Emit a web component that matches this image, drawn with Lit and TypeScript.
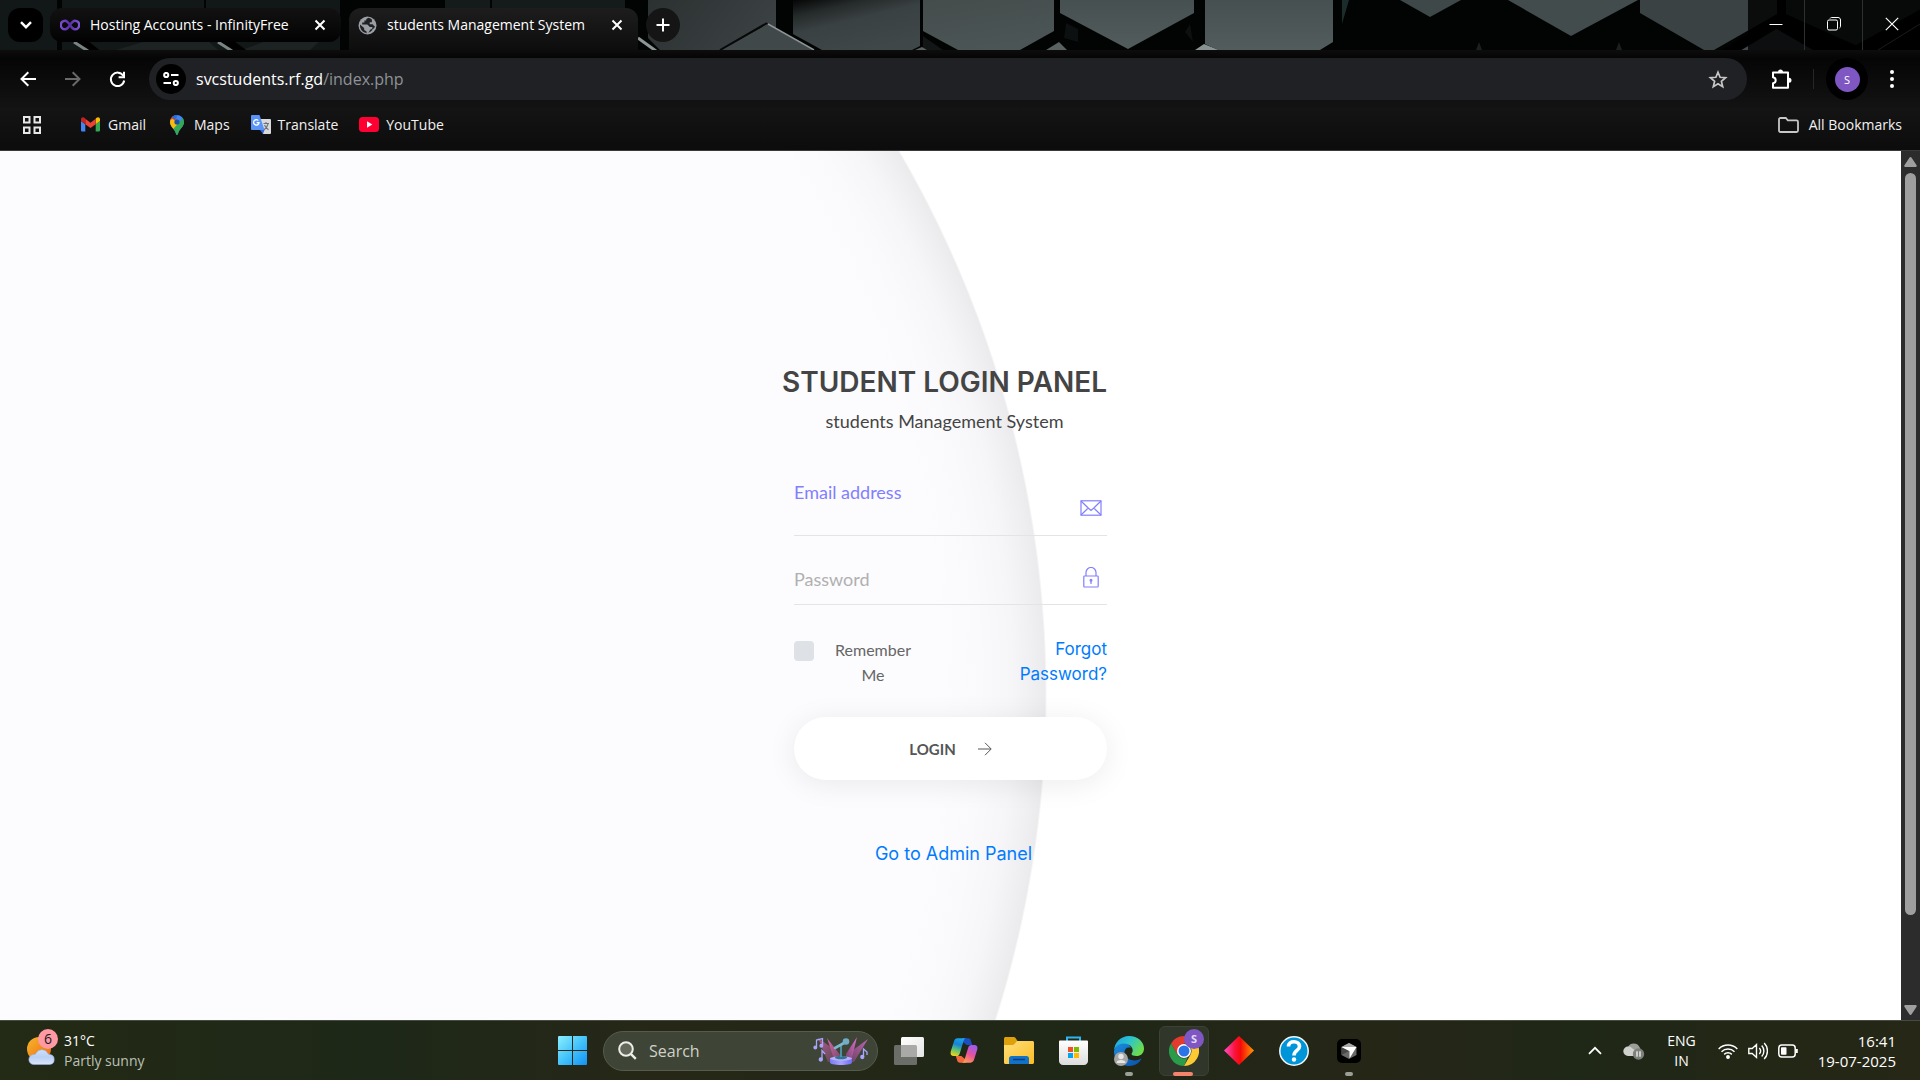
import { LitElement, html, css, svg } from "lit";
import { customElement, state } from "lit/decorators.js";

const uiFont = css`"Open Sans", "Noto Sans", sans-serif`;

/* ---------- shared icons ---------- */

const closeIcon = svg`<svg width="12" height="12" viewBox="0 0 12 12" fill="none" stroke="#fff" stroke-width="2" aria-hidden="true"><path d="M1.5 1.5l9 9M10.5 1.5l-9 9"/></svg>`;

const infinityIcon = html`<svg width="20" height="12" viewBox="0 0 20 12" fill="none" aria-hidden="true">
  <defs><linearGradient id="inf" x1="0" x2="1"><stop offset="0" stop-color="#7a4fd0"/><stop offset=".5" stop-color="#5b2ea6"/><stop offset="1" stop-color="#7d55d6"/></linearGradient></defs>
  <path d="M10 6C8.2 3.2 6.9 1.7 5.1 1.7a4.2 4.2 0 0 0 0 8.6C6.9 10.3 8.2 8.8 10 6s3.1-4.3 4.9-4.3a4.3 4.3 0 0 1 0 8.6C13.1 10.3 11.8 8.8 10 6z" stroke="url(#inf)" stroke-width="2.4"/></svg>`;

const globeIcon = html`<svg width="19" height="19" viewBox="0 0 19 19" aria-hidden="true">
  <circle cx="9.5" cy="9.5" r="9" fill="#9aa0a6"/>
  <path d="M10.8 1.8c-2 .4-2.7 1.2-2.7 2.6H6.4v2.2H4.2v2h4.9c1.7 0 1.3 2.4 3 2.4h2.3c.3 2.3-1.6 2.3-2.4 2.8-.4 1.5-1.4 3.2-3.2 3.7l-.5-2.5c-2 0-2.2-1.3-2.2-2.9L2 8.6C1.6 13 4.6 17 9 17.2l1.5-.8c2.2-.3 3.4-1.6 4.2-3.3.9-.4 1.7-1.3 2.3-2.6-1.5-.2-1.2-1.8-2.6-2.2h-2.7V6.2h2.2V3.6c-.9-.9-2-1.4-3.1-1.8z" fill="#202124"/></svg>`;

/* ---------- browser window frame ---------- */

@customElement("browser-frame")
export class BrowserFrame extends LitElement {
  static styles = css`
    :host { display: block; font-family: ${uiFont}; color: #fff; background: #0c0c0c; }
    * { box-sizing: border-box; }
    button { border: 0; padding: 0; margin: 0; background: none; color: inherit; font: inherit; display: flex; align-items: center; justify-content: center; flex: none; }
    svg { display: block; flex: none; }
    .strip { position: relative; display: flex; align-items: center; height: 50px; padding: 0 0 0 8px; overflow: hidden; background: #040505; }
    .backdrop { position: absolute; left: 0; top: 0; width: 100%; height: 50px; }
    .strip > :not(.backdrop) { position: relative; }
    .finder { width: 35px; height: 34px; border-radius: 12px; background: #000; }
    .tabs { display: flex; gap: 8px; margin-left: 7px; align-self: stretch; padding-top: 8px; }
    .tab { display: flex; align-items: center; font-size: 14px; line-height: 20px; white-space: nowrap; }
    .tab .name { flex: 1; }
    .idle { width: 291px; height: 34px; padding: 0 13px 0 10px; gap: 10px; border-radius: 12px; background: linear-gradient(#121212, #020202); }
    .live { width: 289px; height: 42px; padding: 0 13px 8px 9px; gap: 10px; border-radius: 12px 12px 0 0; background: linear-gradient(#1d1d1d, #0d0d0d); }
    .shut { width: 16px; height: 24px; }
    .plus { width: 34px; height: 34px; margin-left: 8px; border-radius: 17px; background: #151515; }
    .captions { display: flex; align-self: stretch; margin-left: auto; background: rgba(0, 0, 0, 0.8); }
    .captions button { width: 58px; padding-bottom: 2px; border-left: 1px solid #2b3030; }
    .captions button:first-child { width: 56px; border-left: 0; }
    .tools { display: flex; align-items: center; height: 58px; background: linear-gradient(#0d0d0d, #050505 8px, #131313); padding: 0 18px 0 18px; }
    .nav { display: flex; gap: 26px; margin-right: 22px; }
    .nav button { width: 19px; height: 30px; }
    .omni { display: flex; align-items: center; flex: 1; height: 42px; padding: 0 19px 0 7px; border-radius: 21px; background: #202124; }
    .site { width: 30px; height: 30px; border-radius: 15px; background: #000; margin-right: 10px; }
    .url { flex: 1; font-size: 16px; line-height: 22px; white-space: nowrap; }
    .url a { color: #fff; text-decoration: none; }
    .path { color: #8f9296; }
    .side { display: flex; align-items: center; margin-left: 24px; }
    .rule { width: 1px; height: 20px; background: #262626; margin: 0 12px 0 21px; }
    .avatar { width: 42px; height: 42px; border-radius: 21px; background: #000; margin: 0 14px 0 0; }
    .avatar span { width: 25px; height: 25px; border-radius: 13px; background: #7e57c2; font-size: 11px; line-height: 25px; }
    .dots { width: 20px; height: 30px; }
    .marks { display: flex; align-items: center; height: 43px; padding: 0 18px 9px 22px; background: linear-gradient(#141414, #0c0c0c); border-bottom: 1px solid #3a3a3a; font-size: 14px; line-height: 20px; }
    .marks a { display: flex; align-items: center; color: #f1f1f1; text-decoration: none; white-space: nowrap; }
    .grid { width: 20px; margin-right: 39px; }
    .links { display: flex; gap: 21px; }
    .links a { gap: 7px; }
    .all { margin-left: auto; gap: 10px; }
  `;

  render() {
    return html`
      <div class="strip">
        <svg class="backdrop" viewBox="0 0 1920 50" preserveAspectRatio="xMinYMin slice" aria-hidden="true">
          <defs>
            <linearGradient id="pa" x1="0" x2="1" y2=".3"><stop offset="0" stop-color="#2b3131"/><stop offset="1" stop-color="#3b4142"/></linearGradient>
            <linearGradient id="pb" x1="0" y1="0" x2=".6" y2="1"><stop offset="0" stop-color="#050606"/><stop offset=".25" stop-color="#252a2a"/><stop offset=".5" stop-color="#3a4142"/><stop offset="1" stop-color="#404748"/></linearGradient>
            <linearGradient id="pc" y2="1" x2=".4"><stop offset="0" stop-color="#444c4c"/><stop offset="1" stop-color="#4c5555"/></linearGradient>
            <linearGradient id="pd" x1="0" x2="0" y2="1"><stop offset="0" stop-color="#465050"/><stop offset="1" stop-color="#525c5c"/></linearGradient>
          </defs>
          <path fill="#020303" d="M0 0h1920v50H0z"/>
          <path fill="#121717" d="M0 0h57v50H0zM62 0h142v50H62zM206 0h134v50H206z"/>
          <path fill="#151a1a" d="M445 0h45v9h-45zM492 0h133v20H492z"/>
          <path fill="#1d2222" d="M116 50l30-9h62l10 9zM242 50l24-9h54l-10 9z"/>
          <path stroke="#000" stroke-width="9" d="M75 36l22 18M222 38l22 16"/>
          <path stroke="#7b8484" stroke-width="3" d="M74 42l14 9M218 42l14 9"/>
          <path fill="url(#pa)" d="M648 0h128v32l-9-9-47 27h-60l-12-12z"/>
          <path fill="#41484a" d="M767 24l46 26h-92z"/>
          <path stroke="#070909" stroke-width="2" fill="none" d="M720 50l47-27"/>
          <path stroke="#8c9697" stroke-width="1.5" fill="none" d="M768 24l46 26"/>
          <path stroke="#8c9697" stroke-width="3" d="M638 38l18 13"/>
          <path fill="url(#pb)" d="M793 0h127v46l-8 4h-90l-29-16z"/>
          <path fill="url(#pc)" d="M923 0h131v31l-34 19h-62l-35-19z"/>
          <path fill="#121616" d="M923 36l20 14h-20z"/>
          <path fill="#596161" d="M915 50l7-3 5 3zM1046 50l13-8 8 8z"/>
          <path fill="url(#pd)" d="M1060 0h134v13l-66 36-68-36z"/>
          <path fill="#0c1010" d="M1066 23l12 6v13l-14-4zM1190 24l3 18-8-10z"/>
          <path fill="#899292" d="M1198 48l6-4 15 6h-24z"/>
          <path fill="url(#pd)" d="M1205 0h128v42l-13 8h-102l-13-6z"/>
          <path fill="#1c2c2c" d="M1342 0h7l-7 24z"/>
          <path fill="#3e4849" d="M1400 0h61l-31 17z"/>
          <path fill="#424c4d" d="M1508 0h130l-67 36z"/>
          <path fill="#3b4243" d="M1640 0h137v14l-63 36h-10l-64-37z"/>
          <path fill="#40484a" d="M1738 50l37-22 38 22z"/>
          <path fill="#2c3333" d="M1786 0h134v16l-58 32-76-34z"/>
          <path stroke="#000" stroke-width="10" fill="none" d="M1722 56l56-34 72 32 72-40"/>
          <path stroke="#7d8585" fill="none" d="M1878 50l42-26"/>
          <path fill="#1a2020" d="M1479 42l3 8h-6zM1619 42l3 8h-6z"/>
        </svg>
        <button class="finder" aria-label="Search tabs">
          <svg width="12" height="8" viewBox="0 0 12 8" fill="none" stroke="#fff" stroke-width="2.4"><path d="M1 1.2l5 5 5-5"/></svg>
        </button>
        <div class="tabs">
          <div class="tab idle">${infinityIcon}<span class="name">Hosting Accounts - InfinityFree</span><button class="shut" aria-label="Close tab">${closeIcon}</button></div>
          <div class="tab live">${globeIcon}<span class="name">students Management System</span><button class="shut" aria-label="Close tab">${closeIcon}</button></div>
        </div>
        <button class="plus" aria-label="New tab">
          <svg width="14" height="14" viewBox="0 0 14 14" stroke="#fff" stroke-width="2"><path d="M7 .5v13M.5 7h13"/></svg>
        </button>
        <div class="captions">
          <button aria-label="Minimize"><svg width="14" height="14" viewBox="0 0 14 14" stroke="#fff"><path d="M.5 7.5h13"/></svg></button>
          <button aria-label="Restore"><svg width="14" height="14" viewBox="0 0 14 14" fill="none" stroke="#fff"><rect x=".5" y="3" width="10" height="10" rx="1.5"/><path d="M3 1.5C3.3.8 4 .5 4.6.5H11c1.5 0 2.5 1 2.5 2.5v6.4c0 .7-.4 1.3-1 1.6"/></svg></button>
          <button aria-label="Close window"><svg width="14" height="14" viewBox="0 0 14 14" stroke="#fff" stroke-width="1.2"><path d="M.8.8l12.4 12.4M13.2.8L.8 13.2"/></svg></button>
        </div>
      </div>
      <div class="tools">
        <div class="nav">
          <button aria-label="Back"><svg width="16" height="16" viewBox="0 0 16 16" fill="none" stroke="#fff" stroke-width="2"><path d="M16 8H1.8M8.3 1.2L1.5 8l6.8 6.8"/></svg></button>
          <button aria-label="Forward"><svg width="16" height="16" viewBox="0 0 16 16" fill="none" stroke="#6a6a6a" stroke-width="2"><path d="M0 8h14.2M7.7 1.2L14.5 8l-6.8 6.8"/></svg></button>
          <button aria-label="Reload"><svg width="17" height="17" viewBox="0 0 17 17" fill="none" stroke="#fff" stroke-width="2"><path d="M14.3 4.8A6.7 6.7 0 1 0 15.2 9.5"/><path d="M15 .8v5.4H9.6"/></svg></button>
        </div>
        <div class="omni">
          <button class="site" aria-label="View site information"><svg width="16" height="14" viewBox="0 0 16 14" fill="none" stroke="#fff" stroke-width="2"><circle cx="3.2" cy="3" r="2.1"/><path d="M8 3h7.5M.5 11H8"/><circle cx="12.8" cy="11" r="2.1"/></svg></button>
          <div class="url"><a href="#">svcstudents.rf.gd<span class="path">/index.php</span></a></div>
          <button aria-label="Bookmark this tab"><svg width="20" height="19" viewBox="0 0 20 19" fill="none" stroke="#c7c7c7" stroke-width="1.7"><path d="M10 2.2l2.1 5.1 5.5.4-4.2 3.6 1.3 5.4L10 13.8l-4.7 2.9 1.3-5.4-4.2-3.6 5.5-.4z"/></svg></button>
        </div>
        <div class="side">
          <button aria-label="Extensions"><svg width="21" height="21" viewBox="0 0 21 21"><path fill="none" stroke="#fff" stroke-width="2" stroke-linejoin="round" d="M2 3.5h15v15.3H2v-4.6c1.5-.2 2.7-1.4 2.7-3s-1.2-2.8-2.7-3z"/><path fill="#fff" d="M7 3a2.5 2.5 0 0 1 5 0zM18 8.700a2.5 2.5 0 0 1 0 5z"/></svg></button>
          <span class="rule"></span>
          <button class="avatar" aria-label="Profile"><span>S</span></button>
          <button class="dots" aria-label="Menu"><svg width="4" height="18" viewBox="0 0 4 18" fill="#fff"><circle cx="2" cy="2" r="2"/><circle cx="2" cy="9" r="2"/><circle cx="2" cy="16" r="2"/></svg></button>
        </div>
      </div>
      <nav class="marks" aria-label="Bookmarks">
        <button class="grid" aria-label="Apps"><svg width="18" height="18" viewBox="0 0 18 18" fill="none" stroke="#e8e8e8" stroke-width="2"><rect x="1" y="1" width="5.5" height="5.5"/><rect x="11.5" y="1" width="5.5" height="5.5"/><rect x="1" y="11.5" width="5.5" height="5.5"/><rect x="11.5" y="11.5" width="5.5" height="5.5"/></svg></button>
        <div class="links">
          <a href="#"><svg width="20" height="15" viewBox="0 0 20 15"><path fill="#4285f4" d="M1.3 14.5h3V7.200L0 4v9.200c0 .7.600 1.300 1.300 1.300z"/><path fill="#34a853" d="M14.700 14.500h3c.7 0 1.300-.6 1.300-1.300V4l-4.300 3.200z"/><path fill="#fbbc04" d="M14.700 1.800v5.400L19 4V2.300c0-2-2-2.800-3.400-1.600z"/><path fill="#ea4335" d="M4.300 7.200V1.800l5.200 3.900 5.200-3.900v5.400l-5.200 3.900z"/><path fill="#c5221f" d="M0 2.300V4l4.300 3.200V1.800L3.400.7C2-.5 0 .3 0 2.300z"/></svg>Gmail</a>
          <a href="#"><svg width="20" height="20" viewBox="-3 0 20 20"><defs><clipPath id="pin"><path d="M7 0a7 7 0 0 1 7 7c0 4.700-4.600 6.500-5.900 11.600-.4 1.800-1.800 1.800-2.200 0C4.600 13.500 0 11.700 0 7a7 7 0 0 1 7-7z"/></clipPath></defs><g clip-path="url(#pin)"><path fill="#4285f4" d="M0 0h14v20H0z"/><path fill="#ea4335" d="M-1-1h4.500L7 4.500 2.500 9-1 4z"/><path fill="#1a73e8" d="M2 1l5-3v4L4 5z"/><path fill="#fbbc04" d="M-1 5l4-1 5 5-5.500 6L-1 12z"/><path fill="#34a853" d="M14 3v17H3l-.5-5L13 3z"/></g><circle cx="7" cy="7" r="2.600" fill="#174ea6"/></svg>Maps</a>
          <a href="#"><svg width="20" height="19" viewBox="0 0 20 19"><path fill="#d8dadc" d="M9 4h10a1 1 0 0 1 1 1v13a1 1 0 0 1-1 1h-7z"/><path fill="#3367d6" d="M9 15h4.500L12 19z"/><path fill="#5b94f7" d="M1 0h7.500L13.500 15H1a1 1 0 0 1-1-1V1a1 1 0 0 1 1-1z"/><path fill="none" stroke="#fff" stroke-width="1.300" d="M7.300 5.600A2.700 2.700 0 1 0 8 7.600H5.600"/><path fill="none" stroke="#6b7278" stroke-width="1.100" d="M12.500 8.500H18M15 7v1.500M17 9c-.6 2.500-2 4.500-4 5.700M13.500 10c.8 2 2 3.500 4 4.700"/></svg>Translate</a>
          <a href="#"><svg width="20" height="15" viewBox="0 0 20 15"><rect width="20" height="15" rx="3.500" fill="#ff0033"/><path fill="#fff" d="M8 4.300l5.300 3.200L8 10.700z"/></svg>YouTube</a>
        </div>
        <a class="all" href="#"><svg width="21" height="16" viewBox="0 0 21 16" fill="none" stroke="#c7c7c7" stroke-width="1.800"><path d="M1 2.500C1 1.600 1.600 1 2.500 1h5.300l2 2.300h8.700c.9 0 1.500.6 1.500 1.500v8.700c0 .9-.6 1.500-1.500 1.500h-16C1.600 15 1 14.400 1 13.500z"/></svg>All Bookmarks</a>
      </nav>
    `;
  }
}

/* ---------- login page ---------- */

@customElement("login-page")
export class LoginPage extends LitElement {
  static styles = css`
    :host { display: flex; min-height: 0; background: #fff; }
    * { box-sizing: border-box; }
    .page { flex: 1; display: flex; flex-direction: column; align-items: center; overflow: hidden; padding-top: 207px;
      font-family: Lato, sans-serif;
      background: radial-gradient(circle at -30px 543px, #fcfcfe 970px, #fafafc 1010px, #f6f6f8 1042px, #efeff1 1064px, #ebebed 1075px, #fff 1077px); }
    .card { width: 313px; display: flex; flex-direction: column; }
    header { display: flex; flex-direction: column; align-items: center; margin-right: 12px; white-space: nowrap; color: #444; }
    h1 { margin: 0; font: 600 28px/48px Inter, sans-serif; }
    .sub { margin: 1px 0 46px; font-size: 18px; line-height: 28px; color: #444; }
    .field { display: grid; grid-template: 54px / 1fr 22px; align-items: center; padding-right: 5px; border-bottom: 1px solid #e4e4e6; margin-bottom: 14px; }
    .field label { grid-area: 1 / 1; font-size: 18px; line-height: 24px; color: #b0b0b0; pointer-events: none; padding-top: 4px; }
    .field .raised { align-self: start; padding: 0; line-height: 22px; color: #827ffe; }
    .field input { grid-area: 1 / 1; width: 100%; height: 54px; border: 0; padding: 20px 0 0; background: none; font: 18px/24px Lato, sans-serif; outline: 0; }
    .field svg { display: block; justify-self: center; }
    .options { display: flex; justify-content: space-between; align-items: flex-start; padding: 18px 0 30px; font-size: 16px; line-height: 25px; }
    .remember { display: flex; align-items: flex-start; gap: 20px; color: #666; }
    .remember input { appearance: none; width: 20px; height: 20px; margin: 4px 0 0; border-radius: 4px; background: #dee2e6; }
    .remember input:checked { background: #827ffe; }
    .remember label { width: 78px; text-align: center; }
    a { color: #007bff; text-decoration: none; font-family: Inter, sans-serif; }
    .forgot { width: 90px; text-align: right; font-size: 17px; }
    .login { display: flex; align-items: center; justify-content: center; gap: 22px; height: 63px; border: 0; border-radius: 32px; background: #fff; color: #555; font: 700 15px/24px Lato, sans-serif; box-shadow: 0 4px 30px rgba(0, 0, 0, 0.08); }
    .admin { align-self: center; margin: 61px 0 0 6px; font-size: 18px; line-height: 26px; }
    .bar { width: 19px; display: flex; flex-direction: column; align-items: center; gap: 6px; padding: 6px 0 5px; background: #2c2c2c; }
    .thumb { flex: 740; width: 11px; border-radius: 6px; background: #9f9f9f; }
    .rest { flex: 78; }
    .bar svg { display: block; flex: none; }
  `;

  @state() private remember = false;

  render() {
    return html`
      <main class="page">
        <form class="card" @submit=${(e: Event) => e.preventDefault()}>
          <header>
            <h1>STUDENT LOGIN PANEL</h1>
            <div class="sub">students Management System</div>
          </header>
          <div class="field">
            <label class="raised" for="email">Email address</label>
            <input id="email" type="email" />
            <svg width="22" height="16" viewBox="0 0 22 16" fill="none" stroke="#827ffe" stroke-width="1.2" aria-hidden="true"><rect x="1" y=".8" width="20" height="14.4"/><path d="M1 1l7.2 7L11 10.5 13.8 8 21 1M1 15l7.2-7M21 15l-7.2-7"/></svg>
          </div>
          <div class="field">
            <label for="password">Password</label>
            <input id="password" type="password" />
            <svg width="16" height="21" viewBox="0 0 16 21" fill="none" stroke="#827ffe" stroke-width="1.2" aria-hidden="true"><rect x=".8" y="9" width="14.4" height="11" rx=".8"/><path d="M3 9V5.5a5 5 0 0 1 10 0V9M8 13v4"/><circle cx="8" cy="13.2" r=".9"/></svg>
          </div>
          <div class="options">
            <div class="remember">
              <input id="remember" type="checkbox" .checked=${this.remember} @change=${(e: Event) => (this.remember = (e.target as HTMLInputElement).checked)} />
              <label for="remember">Remember Me</label>
            </div>
            <a class="forgot" href="#">Forgot Password?</a>
          </div>
          <button class="login" type="submit">LOGIN
            <svg width="14" height="14" viewBox="0 0 14 14" fill="none" stroke="#555" aria-hidden="true"><path d="M0 7h13M7 .8L13.2 7 7 13.2"/></svg>
          </button>
          <a class="admin" href="#">Go to Admin Panel</a>
        </form>
      </main>
      <div class="bar" aria-hidden="true">
        <svg width="13" height="10" viewBox="0 0 13 10" fill="#9f9f9f"><path d="M6.5 0c.5 0 .8.2 1.1.7l5 7.6c.4.8 0 1.7-.9 1.7H1.3C.4 10 0 9.1.4 8.3l5-7.6C5.7.2 6 0 6.5 0z"/></svg>
        <div class="thumb"></div>
        <div class="rest"></div>
        <svg width="13" height="10" viewBox="0 0 13 10" fill="#9f9f9f"><path d="M6.5 10c.5 0 .8-.2 1.1-.7l5-7.6C13 .9 12.6 0 11.7 0H1.3C.4 0 0 .9.4 1.7l5 7.6c.3.5.6.7 1.1.7z"/></svg>
      </div>
    `;
  }
}

/* ---------- taskbar ---------- */

const apps = [
  { name: "Task View", state: "", icon: html`<svg width="30" height="28" viewBox="0 0 30 28"><defs><linearGradient id="tv" x2="1" y2="1"><stop stop-color="#fff"/><stop offset="1" stop-color="#e4e4e4"/></linearGradient></defs><rect y="8" width="23" height="20" rx="1.5" fill="#6a6d68"/><rect x="7" width="23" height="20" rx="1.5" fill="url(#tv)"/><path fill="#a9aaa8" d="M7 8h14.5A1.5 1.5 0 0 1 23 9.5V20H8.5A1.5 1.5 0 0 1 7 18.5z"/></svg>` },
  { name: "Copilot", state: "", icon: html`<svg width="28" height="25" viewBox="0 0 30 26"><defs>
      <linearGradient id="ca" x1=".6" x2=".3" y2="1"><stop stop-color="#1aa5e8"/><stop offset=".35" stop-color="#1682d8"/><stop offset=".65" stop-color="#57c178"/><stop offset="1" stop-color="#f0d31c"/></linearGradient>
      <linearGradient id="cb" x1=".7" x2=".2" y2="1"><stop stop-color="#9a5cf0"/><stop offset=".5" stop-color="#e8529c"/><stop offset="1" stop-color="#ffa04f"/></linearGradient></defs>
      <path fill="#1a4fc4" d="M13 0h6.5c1.5 0 2.3.8 2.7 2l1.6 5h-6L13 3z"/><path fill="#f26a3c" d="M17 26h-6.5c-1.5 0-2.3-.8-2.7-2l-1.6-5h6l4.8 4z"/>
      <path fill="url(#ca)" d="M8 0h9.5c-2 0-2.6 1.5-3.2 3.5L10.6 15.7C9.9 18.2 8.9 19 7 19H4c-2.8 0-4-2-3.2-4.8L4.1 3.5C4.8 1.3 6 0 8 0z"/>
      <path fill="url(#cb)" d="M22 26h-9.5c2 0 2.6-1.5 3.2-3.5l3.7-12.2C20.1 7.8 21.1 7 23 7h3c2.8 0 4 2 3.2 4.8l-3.3 10.7c-.7 2.2-1.9 3.5-3.9 3.5z"/></svg>` },
  { name: "File Explorer", state: "", icon: html`<svg width="30" height="27" viewBox="0 0 30 27"><defs><linearGradient id="fo" x2="1" y2="1"><stop stop-color="#ffe07a"/><stop offset="1" stop-color="#fbbc25"/></linearGradient></defs><path fill="#dea00c" d="M0 1.500C0 .7.700 0 1.500 0h8.200c.7 0 1.300.3 1.700.8L13.500 4v5H0z"/><path fill="url(#fo)" d="M0 8h8.500c.7 0 1.300-.2 1.800-.7L13 4h15.500c.8 0 1.500.7 1.500 1.500v20c0 .8-.7 1.500-1.500 1.500h-27A1.500 1.500 0 0 1 0 25.500z"/><path fill="#1272c8" d="M5 27v-5.500C5 20 6 19 7.500 19h15c1.500 0 2.500 1 2.500 2.500V27z"/><path stroke="#0a3d80" stroke-width="1.5" d="M9 22.5h12"/></svg>` },
  { name: "Microsoft Store", state: "", icon: html`<svg width="29" height="29" viewBox="0 0 29 29"><defs><linearGradient id="st" x2="0" y2="1"><stop stop-color="#fff"/><stop offset="1" stop-color="#dcdcdc"/></linearGradient></defs><path fill="none" stroke="#2cb6f0" stroke-width="2" d="M8 6V1.5h13V6"/><path fill="url(#st)" d="M0 5.500C0 5 .5 4.500 1 4.500h27c.5 0 1 .5 1 1V25c0 2.200-1.800 4-4 4H4c-2.200 0-4-1.800-4-4z"/><path fill="#f25022" d="M9 11h5v5H9z"/><path fill="#7fba00" d="M15 11h5v5h-5z"/><path fill="#00a4ef" d="M9 17h5v5H9z"/><path fill="#ffb900" d="M15 17h5v5h-5z"/></svg>` },
  { name: "Edge", state: "open", icon: html`<svg width="30" height="30" viewBox="0 0 30 30"><defs><linearGradient id="ea" x2="1" y2=".5"><stop stop-color="#1f9fe0"/><stop offset=".5" stop-color="#2bc3d2"/><stop offset="1" stop-color="#6bdc4e"/></linearGradient><linearGradient id="eb" x2="1" y2="1"><stop stop-color="#1a8fe0"/><stop offset="1" stop-color="#0c4fa8"/></linearGradient></defs><path fill="url(#eb)" d="M1 13c1-4 5-7 10-6 3 .6 5 2.500 6 5-4-1.500-6.500 1-6.500 4.300 0 5.500 6 8.700 11 8.200 3-.3 5-2 6-2.300-1 3.500-5.500 7.800-12.500 7.800C6.500 30-.5 22.500 0 15z"/><path fill="url(#ea)" d="M0 15C.3 6.500 6.800 0 15 0c9 0 15 6 15 12.500 0 5-3.500 7.500-7.500 7.500-3 0-5-1-5-2 0-.8 1.200-1.400 1.200-3.500 0-4-4-7-9.200-7C5 7.500 1 10.500 0 15z"/><circle cx="7" cy="23" r="7" fill="#a6a6a6"/><circle cx="7" cy="20.5" r="2.7" fill="#e6e6e6"/><path fill="#e6e6e6" d="M2.500 27c0-2.200 2-3 4.500-3s4.500.8 4.500 3z"/></svg>` },
  { name: "Chrome", state: "active", icon: html`<svg width="30" height="30" viewBox="0 0 30 30"><path fill="#e33b2e" d="M15 0c5.500 0 10.400 3 13 7.500H15L8.500 18.700 2 7.500A15 15 0 0 1 15 0z"/><path fill="#2a9c49" d="M2 7.500l6.500 11.200A7.500 7.500 0 0 0 15 22.500c1.300 0 2.400-.2 3.500-.8L15 30A15 15 0 0 1 2 7.500z"/><path fill="#fcc934" d="M28 7.500A15 15 0 0 1 15 30l6.500-11.300a7.500 7.500 0 0 0 0-7.400L19 7.500z"/><circle cx="15" cy="15" r="7" fill="#fff"/><circle cx="15" cy="15" r="5.5" fill="#2a74e8"/></svg>` },
  { name: "AnyDesk", state: "", icon: html`<svg width="30" height="30" viewBox="0 0 30 30"><defs><linearGradient id="di" x2="1"><stop stop-color="#ff4fc8"/><stop offset=".35" stop-color="#fa1440"/><stop offset=".55" stop-color="#f50a0a"/><stop offset="1" stop-color="#ff9a00"/></linearGradient></defs><path fill="url(#di)" d="M15 0l15 14.500L15 29 0 14.500z"/></svg>` },
  { name: "Help", state: "", icon: html`<svg width="30" height="30" viewBox="0 0 30 30"><circle cx="15" cy="15" r="14.2" fill="#0095d9" stroke="#f4f8fa" stroke-width="1.5"/><path fill="none" stroke="#fff" stroke-width="3.6" d="M9.500 10.500C9.500 7.200 12 5.800 15 5.800s5.500 1.600 5.500 4.700c0 4-5.500 4-5.500 9"/><circle cx="15" cy="23.5" r="2.2" fill="#fff"/></svg>` },
  { name: "Cursor", state: "open", icon: html`<svg width="24" height="24" viewBox="0 0 24 24"><rect width="24" height="24" rx="5" fill="#000"/><path fill="#6a6a6a" d="M12 4l7.500 4v8L12 20l-7.500-4V8z"/><path fill="#a8a8a8" d="M12 4l7.500 4L12 12 4.500 8z"/><path fill="#484848" d="M4.500 8l7.500 4-7.500 4z"/><path fill="#fff" d="M4.500 8h15L12.500 19.500V12z"/></svg>` },
];

@customElement("task-bar")
export class TaskBar extends LitElement {
  static styles = css`
    :host { display: grid; grid-template-columns: 1fr auto 1fr; align-items: center; height: 59px; padding: 0 24px 0 27px; border-top: 1px solid #474c40; font: 14px/20px ${uiFont}; color: #fff;
      background: linear-gradient(90deg, #232a15, #1e2818 20%, #262717 34%, #1f2716 55%, #262617 72%, #1f2717 82%, #222716 90%, #262716); }
    * { box-sizing: border-box; }
    svg { display: block; flex: none; }
    button { border: 0; padding: 0; margin: 0; background: none; color: inherit; font: inherit; text-align: left; display: flex; align-items: center; justify-content: center; }
    .weather { gap: 9px; justify-self: start; }
    .weather small { display: block; font-size: 14px; color: #bcc0b8; }
    .symbol { position: relative; }
    .badge { position: absolute; width: 20px; height: 20px; border-radius: 10px; text-align: center; line-height: 20px; }
    .count { left: 11px; top: -8px; background: #ff99a4; color: #1a1a1a; font-size: 14px; }
    .middle { display: flex; align-items: center; margin-left: 11px; }
    .start { width: 29px; height: 29px; margin-right: 16px; }
    .search { display: flex; align-items: center; width: 275px; height: 40px; padding: 0 8px 0 14px; gap: 12px; border: 1px solid #565b4b; border-radius: 20px; background: #3e4436; margin-right: 3px; }
    .search input { flex: 1; min-width: 0; border: 0; padding: 0; outline: 0; background: none; color: #fff; font: 16px/22px ${uiFont}; }
    .search input::placeholder { color: #cfd2ca; opacity: 1; }
    .app { position: relative; width: 55px; height: 52px; }
    .tile { display: flex; align-items: center; justify-content: center; width: 50px; height: 50px; border-radius: 6px; border: 1px solid transparent; }
    .active .tile { background: #30362a; border-color: #3b4134; }
    .open::after, .active::after { content: ""; position: absolute; left: 24px; bottom: 1px; width: 8px; height: 4px; border-radius: 2px; background: #9b9f96; }
    .active::after { left: 17px; width: 20px; background: #f4846c; }
    .user { left: 28px; top: 4px; background: #7e57c2; color: #e4d8f6; font-size: 11px; font-weight: 700; }
    .tray { display: flex; align-items: center; justify-self: end; }
    .lang { text-align: center; margin: 0 22px 0 22px; }
    .status { gap: 10px; margin-right: 20px; }
    .clock { text-align: right; font-size: 15px; }
    .up { margin-right: 21px; }
  `;

  render() {
    return html`
      <button class="weather">
        <span class="symbol">
          <svg width="28" height="28" viewBox="0 0 28 28"><defs><linearGradient id="su" x2="1" y2="1"><stop stop-color="#f5b82e"/><stop offset="1" stop-color="#f0650c"/></linearGradient><linearGradient id="cl" x2="0" y2="1"><stop stop-color="#cfe0fb"/><stop offset=".5" stop-color="#b9cff5"/><stop offset="1" stop-color="#dbe6fa"/></linearGradient></defs><circle cx="12" cy="12" r="12" fill="url(#su)"/><path fill="url(#cl)" stroke="#8fb0ea" stroke-width=".6" d="M7 27.500a5 5 0 0 1-.3-10c1.400-.2 2-.5 2.600-1.600a6.500 6.500 0 0 1 11.400.4c.6 1 1.200 1.200 2.300 1.300a5 5 0 0 1-.2 9.900z"/></svg>
          <span class="badge count">6</span>
        </span>
        <span>31°C<small>Partly sunny</small></span>
      </button>
      <div class="middle">
        <button class="start" aria-label="Start"><svg width="29" height="29" viewBox="0 0 29 29"><defs><linearGradient id="wi" x2="1" y2="1"><stop stop-color="#8beffd"/><stop offset=".5" stop-color="#45c3fa"/><stop offset="1" stop-color="#1292f5"/></linearGradient></defs><path fill="url(#wi)" d="M1 0h13v14H0V1a1 1 0 0 1 1-1zM15 0h13a1 1 0 0 1 1 1v13H15zM0 15h14v14H1a1 1 0 0 1-1-1zM15 15h14v13a1 1 0 0 1-1 1H15z"/></svg></button>
        <label class="search">
          <svg width="19" height="19" viewBox="0 0 19 19" fill="#63685b" stroke="#eceee8" stroke-width="2"><circle cx="8" cy="8" r="6.8"/><path stroke-width="2.4" d="M12.8 12.8l5 5"/></svg>
          <input type="text" placeholder="Search" aria-label="Search" />
          <svg width="56" height="30" viewBox="0 0 56 30"><defs>
            <linearGradient id="la" x2="1" y2="1"><stop stop-color="#e065b0"/><stop offset="1" stop-color="#6d4a63"/></linearGradient>
            <linearGradient id="lb" x1="1" x2="0" y2="1"><stop stop-color="#e26bd0"/><stop offset="1" stop-color="#71456a"/></linearGradient>
            <linearGradient id="lc" x1="0" x2="1"><stop stop-color="#7a7cf0"/><stop offset=".5" stop-color="#a9a2ff"/><stop offset="1" stop-color="#6d6df0"/></linearGradient></defs>
            <path fill="url(#la)" opacity=".7" d="M5 2l17 12-1 12h-6z"/><path fill="url(#la)" d="M14 2l14 18v6h-6z"/>
            <path fill="url(#lb)" opacity=".8" d="M55 3L36 17v9h5z"/><path fill="url(#lb)" d="M44 1l-11 17v8h5z"/>
            <path fill="url(#lc)" d="M17 22h22v4.500c0 1.500-4 2.500-11 2.500s-11-1-11-2.500z"/><ellipse cx="28" cy="22.5" rx="11" ry="2.2" fill="#b5b0ff"/>
            <ellipse cx="28" cy="21.5" rx="6" ry="1.8" fill="#35748c"/><path stroke="#4f9ab3" stroke-width="1.8" d="M28 21V10"/><path stroke="#7bb7cb" stroke-width="2.6" stroke-linecap="round" d="M22 12l9-5"/><circle cx="33" cy="5.5" r="3.3" fill="#6faec4"/>
            <g fill="#a9a6ff" stroke="#a9a6ff" stroke-width="1.3"><path fill="none" d="M3.500 11.500V4l6-1.500v7"/><circle cx="2.3" cy="11.5" r="1.3"/><circle cx="8.3" cy="9.7" r="1.3"/><path fill="none" d="M9 23.500V14.500l3 3.500"/><circle cx="7.8" cy="23.5" r="1.5"/><path fill="none" d="M50.500 21v-8l3.500 3v3"/><circle cx="49.3" cy="21" r="1.5"/></g></svg>
        </label>
        ${apps.map((a) => html`<button class="app ${a.state}" aria-label=${a.name}><span class="tile">${a.icon}</span>${a.name === "Chrome" ? html`<span class="badge user">S</span>` : ""}</button>`)}
      </div>
      <div class="tray">
        <button class="up" aria-label="Show hidden icons"><svg width="14" height="9" viewBox="0 0 14 9" fill="none" stroke="#fff" stroke-width="1.8"><path d="M1 7.800l6-6 6 6"/></svg></button>
        <button aria-label="OneDrive"><svg width="22" height="18" viewBox="0 0 22 18"><path fill="#9c9f98" d="M5 5a6.500 6.500 0 0 1 11.500 0l1.500 3-9 5z"/><path fill="#cfd1cc" d="M5 14a4.700 4.700 0 0 1 0-9.400c2 0 3 .6 4.500 2L16 11v3z"/><circle cx="15.5" cy="12" r="5.7" fill="#7d807b"/><path stroke="#fff" stroke-width="1.2" d="M14 9.200v5.600M17 9.200v5.600"/></svg></button>
        <button class="lang"><span>ENG<br />IN</span></button>
        <button class="status" aria-label="Network, sound and battery">
          <svg width="20" height="16" viewBox="0 0 20 16" fill="none" stroke="#fff" stroke-width="1.5"><path d="M.7 6a13 13 0 0 1 18.600 0M3.500 8.800a9.200 9.200 0 0 1 13 0M6.200 11.400a5.400 5.400 0 0 1 7.600 0"/><circle cx="10" cy="14" r="1.2" fill="#fff"/></svg>
          <svg width="20" height="18" viewBox="0 0 20 18" fill="none" stroke="#fff" stroke-width="1.4"><path d="M.8 6.500h3.400L8.500 2.500v13L4.200 11.500H.8zM11.300 6a4.500 4.500 0 0 1 0 6M13.700 3.500a8 8 0 0 1 0 11M16.200 1a11.500 11.500 0 0 1 0 16"/></svg>
          <svg width="20" height="14" viewBox="0 0 20 14" fill="none" stroke="#fff" stroke-width="1.5"><rect x=".8" y="1" width="16.4" height="12" rx="3"/><rect x="3" y="3.3" width="5.5" height="7.4" rx=".8" fill="#fff" stroke="none"/><path stroke-width="2" d="M18.800 5v4"/></svg>
        </button>
        <button class="clock"><span>16:41<br />19-07-2025</span></button>
      </div>
    `;
  }
}

@customElement("app-root")
export class AppRoot extends LitElement {
  static styles = css`
    :host { display: grid; grid-template-rows: auto 1fr auto; min-height: 100vh; }
  `;

  render() {
    return html`<browser-frame></browser-frame><login-page></login-page><task-bar></task-bar>`;
  }
}
